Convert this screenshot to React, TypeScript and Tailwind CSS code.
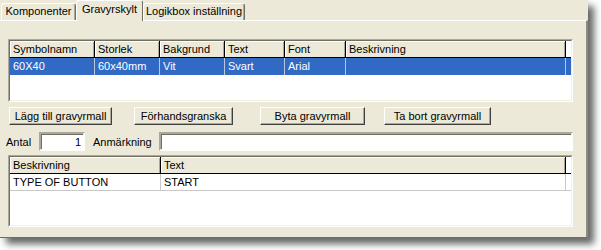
import clsx from "clsx";

const font = "font-['Liberation_Sans',Arial,sans-serif] text-[11px] leading-none text-black";

function Tab({label, active, width}: {label: string, active?: boolean, width: string}) {
    return (
        <div
            className={clsx(
                width,
                "flex items-center justify-center rounded-t-[3px] border-l border-t border-r border-l-white border-t-white border-r-[#716F64] bg-[#ECE9D8]",
                active ? "relative z-10 -mb-px h-[21px] pb-[3px]" : "h-[17px] pb-[1px] shadow-[inset_-1px_0_#ACA899]"
            )}
        >
            {label}
        </div>
    )
}

function Button({label, width, className}: {label: string, width: string, className?: string}) {
    return (
        <div
            className={clsx(
                width,
                className,
                "flex h-[18px] items-center justify-center border border-t-white border-l-white border-r-[#404040] border-b-[#404040] bg-[#ECE9D8] shadow-[inset_-1px_-1px_#ACA899]"
            )}
        >
            {label}
        </div>
    )
}

function Sunken({className, children}: {className?: string, children?: React.ReactNode}) {
    return (
        <div className={clsx(className, "flex border border-t-[#ACA899] border-l-[#ACA899] border-r-white border-b-white")}>
            <div className="flex flex-1 flex-col border border-t-[#716F64] border-l-[#716F64] border-r-[#F1EFE2] border-b-[#F1EFE2] bg-white overflow-hidden">
                {children}
            </div>
        </div>
    )
}

type Column = {title: string, width: string};

function ListView({columns, rows, selected, className}: {columns: Column[], rows: string[][], selected?: number, className?: string}) {
    return (
        <Sunken className={className}>
            <div className="flex h-[17px] shrink-0 border-b border-black">
                {columns.map((c) => (
                    <div
                        key={c.title}
                        className={clsx(c.width, "flex items-center border-r border-r-black bg-[#ECE9D8] pl-[3px] shadow-[inset_1px_1px_white,inset_-1px_0_#ACA899]")}
                    >
                        {c.title}
                    </div>
                ))}
            </div>
            {rows.map((row, i) => (
                <div
                    key={i}
                    className={clsx(
                        "flex h-[17px] shrink-0",
                        i === selected ? "bg-[#316AC5] text-white" : "border-b border-[#C8C8C8]"
                    )}
                >
                    {row.map((cell, j) => (
                        <div
                            key={j}
                            className={clsx(
                                columns[j].width,
                                "flex items-center pl-[3px] border-r",
                                i === selected ? "border-r-[#B9C6DE]" : "border-r-[#C8C8C8]"
                            )}
                        >
                            {cell}
                        </div>
                    ))}
                </div>
            ))}
        </Sunken>
    )
}

export default function App() {
    const templateColumns: Column[] = [
        {title: "Symbolnamn", width: "w-[85px]"},
        {title: "Storlek", width: "w-[65px]"},
        {title: "Bakgrund", width: "w-[65px]"},
        {title: "Text", width: "w-[60px]"},
        {title: "Font", width: "w-[61px]"},
        {title: "Beskrivning", width: "w-[220px]"},
    ];
    const textColumns: Column[] = [
        {title: "Beskrivning", width: "w-[151px]"},
        {title: "Text", width: "w-[405px]"},
    ];

    return (
        <div className={clsx(font, "h-[250px] w-[601px] bg-white")}>
            <div className="flex h-[238px] w-[588px] flex-col bg-[#ECE9D8] shadow-[6px_6px_7px_rgba(0,0,0,0.6)]">
                {/* tabs */}
                <div className="flex h-[20px] items-end pl-[1px]">
                    <Tab label="Komponenter" width="w-[75px]"/>
                    <Tab label="Gravyrskylt" width="w-[67px]" active/>
                    <Tab label="Logikbox inställning" width="w-[102px]"/>
                </div>

                {/* tab page */}
                <div className="flex flex-1 flex-col border-t border-r-2 border-b border-t-white border-r-[#8D8B80] border-b-[#716F64] pl-[6px] pt-[18px]">
                    <ListView
                        className="ml-[2px] h-[63px] w-[565px]"
                        columns={templateColumns}
                        rows={[["60X40", "60x40mm", "Vit", "Svart", "Arial", ""]]}
                        selected={0}
                    />

                    <div className="mt-[5px] flex">
                        <Button label="Lägg till gravyrmall" width="w-[103px]" className="ml-[3px]"/>
                        <Button label="Förhandsgranska" width="w-[99px]" className="ml-[22px]"/>
                        <Button label="Byta gravyrmall" width="w-[105px]" className="ml-[27px]"/>
                        <Button label="Ta bort gravyrmall" width="w-[107px]" className="ml-[19px]"/>
                    </div>

                    <div className="mt-[7px] flex h-[19px] items-center">
                        <span className="w-[33px] pt-[2px]">Antal</span>
                        <div className="flex h-full w-[46px] items-center justify-end border-2 border-t-[#ACA899] border-l-[#ACA899] border-r-white border-b-white bg-white pr-[2px] pt-[1px] shadow-[inset_1px_1px_#716F64]">
                            1
                        </div>
                        <span className="ml-[8px] w-[66px] pt-[2px]">Anmärkning</span>
                        <div className="h-full w-[414px] border-2 border-t-[#ACA899] border-l-[#ACA899] border-r-white border-b-white bg-white shadow-[inset_1px_1px_#716F64]"/>
                    </div>

                    <ListView
                        className="ml-[2px] mt-[4px] h-[72px] w-[565px]"
                        columns={textColumns}
                        rows={[["TYPE OF BUTTON", "START"]]}
                    />
                </div>
            </div>
        </div>
    )
}
